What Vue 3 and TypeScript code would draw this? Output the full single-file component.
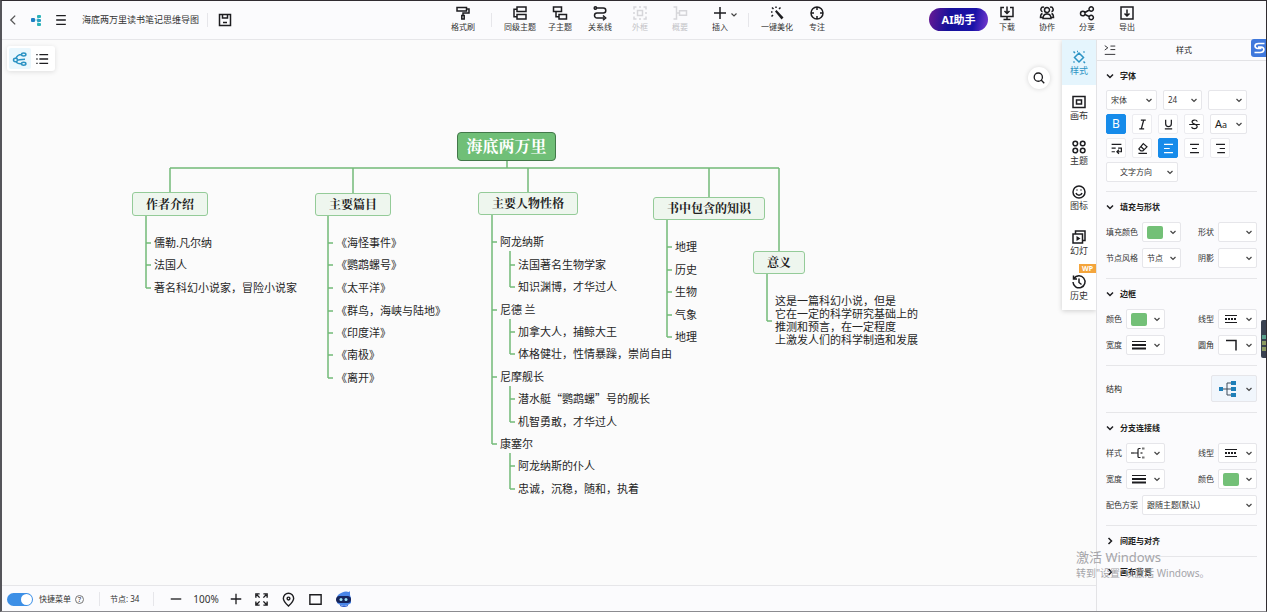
<script setup lang="ts">
import { ref } from 'vue'

interface Icon { s?: string; f?: string }
interface Tool { name: string; icon: string; off?: boolean; menu?: boolean }
interface Leaf { text: string; y: number; kids?: Leaf[] }
interface Branch { text: string; x: number; y: number; w: number; h: number; leafX: number; leaves: Leaf[] }
interface Field { label: string; kind: 'select' | 'swatch' | 'icon'; value?: string; icon?: string; wide?: boolean }
interface Section { title: string; rows: Field[][] }

const icons: Record<string, Icon> = {
  back: { s: 'M10.5 3 5.5 8l5 5' },
  menu: { s: 'M2.500 3h11M2.500 8h11M2.500 13h11' },
  save: { s: 'M2.500 2.500h11v11h-11zM5.500 2.500v3.500h5V2.500M6 10.500h4' },
  brush: { s: 'M2 2.500h9.500v3.500H2zM11.500 4H14v4H8v2.500M6.800 10.500h2.400V14H6.800z' },
  peer: { s: 'M5 2h9v4.500H5zM5 9.500h9V14H5zM5 4.200H2v7.600h3' },
  child: { s: 'M1.500 2h8v4.500h-8zM7 9.500h7.500V14H7zM4 6.500v5.300h3' },
  relation: { s: 'M4.500 3h6.800a2.500 2.500 0 0 1 0 5H5a2.500 2.500 0 0 0 0 5h7M2.200 3a1.200 1.200 0 1 0 2.400 0a1.200 1.200 0 1 0-2.400 0M11 10.500l2.700 2.500L11 15.300' },
  frame: { s: 'M5.500 5.500h5v5h-5zM2 4.500V2h2.500M7 2h2M11.500 2H14v2.500M14 7v2M14 11.500V14h-2.500M9 14H7M4.500 14H2v-2.500M2 9V7' },
  summary: { s: 'M1.500 2h3v12h-3M4.500 8h3M7.500 5.800h7v4.400h-7z' },
  plus: { s: 'M8 2v12M2 8h12' },
  minus: { s: 'M2 8h12' },
  wand: { s: 'M3 2.500l1.500 1.500M7 1.500v1.500M11.500 2.500 10 4M2 7h1.500M2.500 11.500 4 10', f: 'M6 6.500 7.500 5 14.500 12.500 12.500 14.500z' },
  focus: { s: 'M2 8a6 6 0 1 0 12 0a6 6 0 1 0-12 0M8 2v3M8 11v3M2 8h3M11 8h3' },
  download: { s: 'M5 2.500H2v9h12v-9h-3M8 1.500V8M5.500 6 8 8.500 10.500 6M8 11.500v3M4.500 14.500h7' },
  team: { s: 'M5.500 5a2.500 2.500 0 1 0 5 0a2.500 2.500 0 1 0-5 0M4 13.500c0-6 8-6 8 0zM5 2.200A2.300 2.300 0 0 0 3.500 6.700M11 2.200a2.300 2.300 0 0 1 1.500 4.500M3.500 8.500C2 9 1.500 10.500 1.500 12.500H4M12.500 8.500c1.500.5 2 2 2 4H12' },
  share: { s: 'M1.500 8.500a2.300 2.300 0 1 0 4.600 0a2.300 2.300 0 1 0-4.600 0M10 4a2.200 2.200 0 1 0 4.400 0a2.200 2.200 0 1 0-4.400 0M10 12.500a2.200 2.200 0 1 0 4.400 0a2.200 2.200 0 1 0-4.400 0M6 7.500 10.200 5M6 9.500l4.200 2' },
  export: { s: 'M2 2h12v12H2zM8 4.500v6M5.500 8.500 8 11l2.500-2.500' },
  mind: { s: 'M1.500 9a2 1.700 0 1 0 4 0a2 1.700 0 1 0-4 0M9.500 3.500a2.200 1.500 0 1 0 4.400 0a2.200 1.500 0 1 0-4.400 0M9.500 12.700a2.200 1.500 0 1 0 4.400 0a2.200 1.500 0 1 0-4.400 0M4 7.500c1-3 3-4 5.500-4M5.500 9c2 0 3-.8 7.500-.8M4 10.500c1 2 3 2.500 5.500 2.300' },
  list: { s: 'M5 3h10M5 8h10M5 13h10M1.500 3H3M1.500 8H3M1.500 13H3' },
  search: { s: 'M2.500 7a4.700 4.700 0 1 0 9.400 0a4.700 4.700 0 1 0-9.400 0M10.700 10.500 14 14' },
  style: { s: 'M8 4 12.500 8.500 8 13 3.500 8.500zM2.500 2.500l1.500 1.500M12.500 3.500l1-1M12.500 12.500l1.500 1.500M3.500 12.500l-1 1M6 2.500h1' },
  canvas: { s: 'M2 2.500h12v11H2zM5.500 6h5v4h-5z' },
  theme: { s: 'M2 4.500a2.300 2.300 0 1 0 4.600 0a2.300 2.300 0 1 0-4.600 0M9.400 4.500a2.300 2.300 0 1 0 4.600 0a2.300 2.300 0 1 0-4.600 0M2 11.500a2.300 2.300 0 1 0 4.600 0a2.300 2.300 0 1 0-4.600 0M9.400 11.500a2.300 2.300 0 1 0 4.600 0a2.300 2.300 0 1 0-4.600 0' },
  smile: { s: 'M2 8a6 6 0 1 0 12 0a6 6 0 1 0-12 0M5 9c1 3 5 3 6 0M6 5.500v1M10 5.500v1' },
  slides: { s: 'M2 5h9.500v9H2zM4.500 5V2H14v9.500h-2.500', f: 'M5.500 7l4 2.500-4 2.500z' },
  history: { s: 'M3 4.500A6 6 0 1 1 2 8M2.500 1.500v3.500H6M8 4.500V8.500l2.500 2' },
  collapse: { s: 'M2 3l3.500 2.500L2 8M8.500 3.500H14M8.500 7.500H14M2 13h12' },
  italic: { s: 'M6 2.500h6M4 13.500h6M9.500 2.500l-3 11' },
  underline: { s: 'M4.500 2v5a3.500 3.500 0 0 0 7 0V2M3.500 13.500h9' },
  strike: { s: 'M11.500 4.500C10.500 1.500 4.800 2 5 5c.2 3 6.500 2 6.300 5.500C11 14 5 14 4.500 11M1.500 8h13' },
  wrap: { s: 'M2 3h12M2 7.500h5M2 12h4M10 7.500h4V12H8.500M11 9.500 8.500 12l2.500 2.500' },
  eraser: { s: 'M9 2l4.500 4L8.500 11H6L3.500 8.500zM6 5.500l4 4M3 14h10.500' },
  left: { s: 'M2.500 3h11M2.500 8h7M2.500 13h11' },
  center: { s: 'M2.500 3h11M5 8h6M2.500 13h11' },
  right: { s: 'M2.500 3h11M7 8h6.500M4 13h9.500' },
  full: { s: 'M2 6V2h4M10 2h4v4M14 10v4h-4M6 14H2v-4M3 3l3 3M13 13l-3-3M13 3l-3 3M3 13l3-3' },
  pin: { s: 'M8 15C4 11 2.500 9 2.500 6.800a5.500 5.500 0 0 1 11 0C13.500 9 12 11 8 15zM6.500 7a1.500 1.500 0 1 0 3 0a1.500 1.500 0 1 0-3 0' },
  screen: { s: 'M2 3h12v10H2z' },
}

const editTools: Tool[][] = [
  [{ name: '格式刷', icon: 'brush' }],
  [
    { name: '同级主题', icon: 'peer' },
    { name: '子主题', icon: 'child' },
    { name: '关系线', icon: 'relation' },
    { name: '外框', icon: 'frame', off: true },
    { name: '概要', icon: 'summary', off: true },
    { name: '插入', icon: 'plus', menu: true },
  ],
  [{ name: '一键美化', icon: 'wand' }, { name: '专注', icon: 'focus' }],
]
const fileTools: Tool[] = [
  { name: '下载', icon: 'download' },
  { name: '协作', icon: 'team' },
  { name: '分享', icon: 'share' },
  { name: '导出', icon: 'export' },
]
const rail: Tool[] = [
  { name: '样式', icon: 'style' },
  { name: '画布', icon: 'canvas' },
  { name: '主题', icon: 'theme' },
  { name: '图标', icon: 'smile' },
  { name: '幻灯', icon: 'slides' },
  { name: '历史', icon: 'history' },
]
const formatButtons = [
  [['加粗', 'bold'], ['斜体', 'italic'], ['下划线', 'underline'], ['删除线', 'strike']],
  [['自动换行', 'wrap'], ['清除格式', 'eraser'], ['左对齐', 'left'], ['居中', 'center'], ['右对齐', 'right']],
]

const shapeSections: Section[] = [
  {
    title: '填充与形状',
    rows: [
      [{ label: '填充颜色', kind: 'swatch' }, { label: '形状', kind: 'select' }],
      [{ label: '节点风格', kind: 'select', value: '节点' }, { label: '阴影', kind: 'select' }],
    ],
  },
  {
    title: '边框',
    rows: [
      [{ label: '颜色', kind: 'swatch' }, { label: '线型', kind: 'icon', icon: 'dash' }],
      [{ label: '宽度', kind: 'icon', icon: 'width' }, { label: '圆角', kind: 'icon', icon: 'corner' }],
    ],
  },
]
const lineSections: Section[] = [
  {
    title: '分支连接线',
    rows: [
      [{ label: '样式', kind: 'icon', icon: 'fork' }, { label: '线型', kind: 'icon', icon: 'dash' }],
      [{ label: '宽度', kind: 'icon', icon: 'width' }, { label: '颜色', kind: 'swatch' }],
      [{ label: '配色方案', kind: 'select', value: '跟随主题(默认)', wide: true }],
    ],
  },
]
const groups = [shapeSections, lineSections]

const root = { text: '海底两万里', x: 457, y: 92, w: 99, h: 29 }
const trunkY = 128
const branches: Branch[] = [
  {
    text: '作者介绍', x: 132, y: 152, w: 76, h: 24, leafX: 154,
    leaves: [{ text: '儒勒.凡尔纳', y: 203 }, { text: '法国人', y: 225 }, { text: '著名科幻小说家，冒险小说家', y: 248 }],
  },
  {
    text: '主要篇目', x: 315, y: 153, w: 76, h: 23, leafX: 336,
    leaves: [
      { text: '《海怪事件》', y: 203 }, { text: '《鹦鹉螺号》', y: 225 }, { text: '《太平洋》', y: 248 },
      { text: '《群鸟，海峡与陆地》', y: 271 }, { text: '《印度洋》', y: 293 }, { text: '《南极》', y: 315 }, { text: '《离开》', y: 338 },
    ],
  },
  {
    text: '主要人物性格', x: 478, y: 152, w: 100, h: 23, leafX: 500,
    leaves: [
      { text: '阿龙纳斯', y: 202, kids: [{ text: '法国著名生物学家', y: 225 }, { text: '知识渊博，才华过人', y: 247 }] },
      { text: '尼德 兰', y: 270, kids: [{ text: '加拿大人，捕鲸大王', y: 292 }, { text: '体格健壮，性情暴躁，崇尚自由', y: 314 }] },
      { text: '尼摩舰长', y: 337, kids: [{ text: '潜水艇“鹦鹉螺”号的舰长', y: 359 }, { text: '机智勇敢，才华过人', y: 382 }] },
      { text: '康塞尔', y: 404, kids: [{ text: '阿龙纳斯的仆人', y: 426 }, { text: '忠诚，沉稳，随和，执着', y: 449 }] },
    ],
  },
  {
    text: '书中包含的知识', x: 653, y: 157, w: 112, h: 23, leafX: 675,
    leaves: [
      { text: '地理', y: 207 }, { text: '历史', y: 230 }, { text: '生物', y: 252 }, { text: '气象', y: 275 }, { text: '地理', y: 297 },
    ],
  },
  {
    text: '意义', x: 753, y: 211, w: 52, h: 23, leafX: 775,
    leaves: [{ text: '这是一篇科幻小说，但是\n它在一定的科学研究基础上的\n推测和预言，在一定程度\n上激发人们的科学制造和发展', y: 281 }],
  },
]

const stemX = (b: Branch) => b.x + b.w / 2
function comb(x: number, top: number, ys: number[]): string {
  return `M${x} ${top}V${ys[ys.length - 1]}` + ys.map(y => `M${x} ${y}h5`).join('')
}
const links: string[] = [
  `M${stemX(branches[0])} ${trunkY}H${stemX(branches[4])}M507 ${root.y + root.h}V${trunkY}`,
]
const texts: { text: string; x: number; y: number }[] = []
for (const b of branches) {
  links.push(`M${stemX(b)} ${trunkY}V${b.y}`)
  links.push(comb(b.leafX - 8, b.y + b.h, b.leaves.map(l => l.y)))
  for (const l of b.leaves) {
    texts.push({ text: l.text, x: b.leafX, y: l.y })
    if (l.kids) {
      links.push(comb(b.leafX + 10, l.y + 9, l.kids.map(k => k.y)))
      for (const k of l.kids) texts.push({ text: k.text, x: b.leafX + 18, y: k.y })
    }
  }
}
const box = (n: { x: number; y: number; w: number; h: number }) => ({
  left: n.x + 'px', top: n.y + 'px', width: n.w + 'px', height: n.h + 'px',
})

const quickMenu = ref(true)
const activeRail = ref('样式')
const pressed = ref<string[]>(['bold', 'left'])
function toggle(name: string) {
  pressed.value = pressed.value.includes(name) ? pressed.value.filter(n => n !== name) : [...pressed.value, name]
}
</script>

<template>
  <div class="app">
    <header class="top">
      <div class="file">
        <button class="plain" aria-label="返回"><svg class="ico back" viewBox="0 0 16 16"><path :d="icons.back.s" /></svg></button>
        <svg class="logo" viewBox="0 0 14 12">
          <path d="M4 6h4M8 2v8" stroke="#7fd0d6" />
          <rect x="1" y="4" width="4" height="4" rx="1" fill="#1f7fc4" />
          <rect x="7" y="1" width="4" height="3" rx="1" fill="#2bb3b8" />
          <rect x="7" y="5" width="4" height="3" rx="1" fill="#2aa0c4" />
          <rect x="7" y="9" width="4" height="3" rx="1" fill="#2bb3b8" />
        </svg>
        <button class="plain" aria-label="菜单"><svg class="ico" viewBox="0 0 16 16"><path :d="icons.menu.s" /></svg></button>
        <h1>海底两万里读书笔记思维导图</h1>
        <i class="bar"></i>
        <button class="plain" aria-label="保存"><svg class="ico big" viewBox="0 0 16 16"><path :d="icons.save.s" /></svg></button>
      </div>
      <nav class="tools" aria-label="编辑">
        <template v-for="(group, g) in editTools" :key="g">
          <i v-if="g" class="bar"></i>
          <button v-for="t in group" :key="t.name" class="tool" :disabled="t.off">
            <span class="pic">
              <svg class="ico big" viewBox="0 0 16 16"><path :d="icons[t.icon].s" /><path v-if="icons[t.icon].f" class="solid" :d="icons[t.icon].f" /></svg>
              <svg v-if="t.menu" class="chev more" viewBox="0 0 8 8"><path d="M1.500 2.500 4 5l2.500-2.500" /></svg>
            </span>
            <span>{{ t.name }}</span>
          </button>
        </template>
      </nav>
      <nav class="tools share" aria-label="文件">
        <button class="ai">AI助手</button>
        <button v-for="t in fileTools" :key="t.name" class="tool">
          <span class="pic"><svg class="ico big" viewBox="0 0 16 16"><path :d="icons[t.icon].s" /></svg></span>
          <span>{{ t.name }}</span>
        </button>
      </nav>
    </header>

    <div class="body">
      <div class="work">
        <main class="board">
          <svg class="links"><path v-for="(d, i) in links" :key="i" :d="d" /></svg>
          <div class="node root" :style="box(root)">{{ root.text }}</div>
          <div v-for="b in branches" :key="b.text" class="node" :style="box(b)">{{ b.text }}</div>
          <div v-for="(t, i) in texts" :key="i" class="leaf" :style="{ left: t.x + 'px', top: t.y + 'px' }">{{ t.text }}</div>

          <div class="views">
            <button class="on" aria-label="导图"><svg class="ico big" viewBox="0 0 16 16"><path :d="icons.mind.s" /></svg></button>
            <button aria-label="大纲"><svg class="ico" viewBox="0 0 16 16"><path :d="icons.list.s" /></svg></button>
          </div>
          <button class="find" aria-label="搜索"><svg class="ico" viewBox="0 0 16 16"><path :d="icons.search.s" /></svg></button>
          <nav class="rail" aria-label="面板">
            <button v-for="r in rail" :key="r.name" :class="{ on: activeRail === r.name }" @click="activeRail = r.name">
              <svg class="ico big" viewBox="0 0 16 16"><path :d="icons[r.icon].s" /><path v-if="icons[r.icon].f" class="solid" :d="icons[r.icon].f" /></svg>
              <span>{{ r.name }}</span>
              <b v-if="r.icon === 'history'" class="badge">WP</b>
            </button>
          </nav>
        </main>
        <footer class="status">
          <input id="quick" v-model="quickMenu" type="checkbox" class="switch">
          <label for="quick">快捷菜单</label>
          <button class="help" aria-label="帮助">?</button>
          <i class="bar"></i>
          <span class="count">节点: 34</span>
          <i class="bar"></i>
          <div class="zoom">
            <button class="plain" aria-label="缩小"><svg class="ico" viewBox="0 0 16 16"><path :d="icons.minus.s" /></svg></button>
            <span>100%</span>
            <button class="plain" aria-label="放大"><svg class="ico" viewBox="0 0 16 16"><path :d="icons.plus.s" /></svg></button>
          </div>
          <div class="modes">
            <button class="plain" aria-label="全屏"><svg class="ico" viewBox="0 0 16 16"><path :d="icons.full.s" /></svg></button>
            <button class="plain" aria-label="定位"><svg class="ico" viewBox="0 0 16 16"><path :d="icons.pin.s" /></svg></button>
            <button class="plain" aria-label="视图"><svg class="ico" viewBox="0 0 16 16"><path :d="icons.screen.s" /></svg></button>
            <button class="plain" aria-label="助手">
              <svg class="bot" viewBox="0 0 18 18">
                <path d="M3 5Q9 0 14 2l1-1v4l1 3v5q-7 6-14 0V7z" fill="#4a86e8" />
                <rect x="1" y="6" width="15" height="7" rx="3.500" fill="#15245c" />
                <circle cx="6" cy="9.500" r="1.500" fill="#9fe3f5" /><circle cx="11" cy="9.500" r="1.500" fill="#9fe3f5" />
                <path d="M5 15q4 2 8 0v1q-4 2-8 0z" fill="#2c57c9" />
              </svg>
            </button>
          </div>
        </footer>
      </div>

      <aside class="panel">
        <div class="head">
          <button class="plain" aria-label="收起"><svg class="ico" viewBox="0 0 16 16"><path :d="icons.collapse.s" /></svg></button>
          <h2>样式</h2>
        </div>
        <section class="font">
          <h3><svg class="chev" viewBox="0 0 8 8"><path d="M1 2.500 4 5.500l3-3" /></svg>字体</h3>
          <div class="row">
            <span class="pick family"><select aria-label="字体"><option>宋体</option></select><svg class="chev" viewBox="0 0 8 8"><path d="M1.500 3 4 5.500 6.500 3" /></svg></span>
            <span class="pick"><select aria-label="字号"><option>24</option></select><svg class="chev" viewBox="0 0 8 8"><path d="M1.500 3 4 5.500 6.500 3" /></svg></span>
            <span class="pick"><select aria-label="文字颜色"><option></option></select><svg class="chev" viewBox="0 0 8 8"><path d="M1.500 3 4 5.500 6.500 3" /></svg></span>
          </div>
          <div v-for="(line, i) in formatButtons" :key="i" class="row">
            <button v-for="f in line" :key="f[1]" class="fmt" :class="{ on: pressed.includes(f[1]) }" :aria-label="f[0]" @click="toggle(f[1])">
              <template v-if="f[1] === 'bold'">B</template>
              <svg v-else class="ico" viewBox="0 0 16 16"><path :d="icons[f[1]].s" /></svg>
            </button>
            <button v-if="i === 0" class="pick case" aria-label="大小写"><span>A<small>a</small></span><svg class="chev" viewBox="0 0 8 8"><path d="M1.500 3 4 5.500 6.500 3" /></svg></button>
          </div>
          <div class="row">
            <span class="pick direction"><select aria-label="文字方向"><option>文字方向</option></select><svg class="chev" viewBox="0 0 8 8"><path d="M1.500 3 4 5.500 6.500 3" /></svg></span>
          </div>
        </section>

        <template v-for="(sections, g) in groups" :key="g">
          <section v-if="g === 1" class="structure">
            <span>结构</span>
            <button class="pick" aria-label="结构">
              <svg class="tree" viewBox="0 0 20 18">
                <path d="M4 9h13M9 9V3h4M9 9v6h4" fill="none" stroke="#3a4a5a" />
                <rect x="1" y="7" width="4" height="4" /><rect x="13" y="1" width="5" height="4" /><rect x="13" y="7" width="5" height="4" /><rect x="13" y="13" width="5" height="4" />
              </svg>
              <svg class="chev" viewBox="0 0 8 8"><path d="M1.500 3 4 5.500 6.500 3" /></svg>
            </button>
          </section>
          <section v-for="s in sections" :key="s.title">
            <h3><svg class="chev" viewBox="0 0 8 8"><path d="M1 2.500 4 5.500l3-3" /></svg>{{ s.title }}</h3>
            <div v-for="(row, r) in s.rows" :key="r" class="row fields">
              <div v-for="f in row" :key="f.label" class="field" :class="{ wide: f.wide }">
                <label :for="s.title + f.label">{{ f.label }}</label>
                <span v-if="f.kind === 'select'" class="pick">
                  <select :id="s.title + f.label"><option>{{ f.value }}</option></select>
                  <svg class="chev" viewBox="0 0 8 8"><path d="M1.500 3 4 5.500 6.500 3" /></svg>
                </span>
                <button v-else :id="s.title + f.label" class="pick">
                  <span v-if="f.kind === 'swatch'" class="swatch"></span>
                  <svg v-else class="mark" viewBox="0 0 16 14">
                    <template v-if="f.icon === 'dash'"><path d="M2 3.500h12M2 10.500h12" /><path d="M2 7h12" stroke-dasharray="2 1" stroke-width="2" /></template>
                    <template v-if="f.icon === 'width'"><path d="M1 3.500h14" /><path d="M1 7h14" stroke-width="2" /><path d="M1 10.500h14" stroke-width="2" /></template>
                    <path v-if="f.icon === 'corner'" d="M3 2.500h10v10" stroke-width="1.500" />
                    <template v-if="f.icon === 'fork'"><path d="M3 7h4M9.500 2.500H8q-1 0-1 1v7q0 1 1 1h1.500" stroke-width="1.200" /><path d="M0 7h3M11 2.500h2.500M11 11.500h2.500M9.500 7h2" stroke="#777" stroke-width="2" /></template>
                  </svg>
                  <svg class="chev" viewBox="0 0 8 8"><path d="M1.500 3 4 5.500 6.500 3" /></svg>
                </button>
              </div>
            </div>
          </section>
        </template>
        <section class="closed"><h3><svg class="chev" viewBox="0 0 8 8"><path d="M2.500 1l3 3-3 3" /></svg>间距与对齐</h3></section>
        <section class="closed last"><h3><svg class="chev" viewBox="0 0 8 8"><path d="M2.500 1l3 3-3 3" /></svg>画布背景</h3></section>
      </aside>
    </div>

    <div class="notice"><p>激活 Windows</p><p>转到"设置"以激活 Windows。</p></div>
    <svg class="ime" viewBox="0 0 16 18">
      <path d="M3 0h13v18H3q-3 0-3-3V3q0-3 3-3z" fill="#3f78dc" />
      <path d="M13.500 4.500H7.500C3 4.500 3 9.500 7 9.500h3.500M3.500 13.500h5.500c5 0 5-5.500 1-5.500H7" fill="none" stroke="#fff" stroke-width="1.700" />
    </svg>
    <div class="gadget"><i></i><i></i><i></i></div>
  </div>
</template>

<style>
html, body { margin: 0; background: #fbfbfb; }
</style>

<style scoped>
.app {
  position: relative; display: flex; flex-direction: column; min-height: 100vh; box-sizing: border-box;
  background: #fbfbfb; color: #333; overflow: hidden;
  font: 8px/12px "Noto Sans", "Noto Sans CJK SC", sans-serif;
}
.app::after { content: ""; position: absolute; inset: 0; pointer-events: none; border: 1px solid #302c31; border-left: 2px solid #55555a; border-bottom-color: #8b8b90; }
.app * { box-sizing: border-box; }
button, select, input { font: inherit; color: inherit; margin: 0; padding: 0; border: 0; background: none; }
button { display: flex; align-items: center; justify-content: center; cursor: pointer; }
h1, h2, h3, p { margin: 0; font: inherit; }
svg { display: block; flex: none; }
.ico { width: 14px; height: 14px; fill: none; stroke: #1d1d20; stroke-width: 1.5; }
.big { width: 16px; height: 16px; }
.ico .solid { fill: #1d1d20; stroke: none; }
.chev { width: 8px; height: 8px; fill: none; stroke: #444; stroke-width: 1.2; }
.bar { width: 1px; height: 14px; background: #e6e6ea; }

.top { display: flex; align-items: center; height: 40px; padding-right: 120px; border-bottom: 1px solid #e6e6e9; background: #fbfbfd; }
.file { flex: 1; display: flex; align-items: center; padding-left: 6px; }
.file h1 { font-size: 9px; margin: 0 8px 0 14px; white-space: nowrap; }
.file .bar { margin-right: 9px; }
.file .back { stroke: #555; }
.logo { width: 14px; height: 12px; margin: 0 10px; fill: none; }
.tools { display: flex; align-items: center; }
.tools .bar { margin: 0 8px; }
.share { margin-left: 92px; }
.tool { width: 40px; flex-direction: column; padding-bottom: 1px; white-space: nowrap; }
.tool:disabled { color: #c2c2c6; cursor: default; }
.tool:disabled .ico { stroke: #d6d6da; }
.pic { position: relative; }
.more { position: absolute; left: 18px; top: 6px; }
.ai { width: 59px; height: 23px; margin-right: -1px; border-radius: 12px; color: #fff; font-size: 11px; font-weight: 700; background: linear-gradient(100deg, #6a1a94, #16109a 35%, #1a12a8 75%, #7a3bd0); }

.body { flex: 1; display: flex; }
.work { flex: 1; min-width: 0; display: flex; flex-direction: column; }
.board { position: relative; flex: 1; min-height: 460px; overflow: hidden; }
.links { position: absolute; inset: 0; width: 100%; height: 100%; fill: none; stroke: #73ba78; stroke-width: 1.5; }
.node {
  position: absolute; display: flex; align-items: center; justify-content: center; padding-bottom: 1px; white-space: nowrap;
  border: 1px solid #94cb98; border-radius: 3px; background: #eef6ee; color: #222;
  font: 700 12px/16px "Noto Serif CJK SC", "Noto Sans CJK SC", serif;
}
.root { border-color: #43784a; border-radius: 4px; background: #70bf77; color: #fff; font-size: 16px; line-height: 20px; }
.leaf { position: absolute; transform: translateY(-50%); padding-bottom: 2px; white-space: pre; color: #262626; font: 11px/13px "Noto Sans CJK SC", sans-serif; }
.views { position: absolute; left: 7px; top: 6px; display: flex; height: 25px; padding: 2px; border-radius: 3px; background: #fff; box-shadow: 0 1px 5px #0000001f; }
.views button { width: 22px; border-radius: 2px; }
.views .on { background: #eaf7fd; }
.on > .ico { stroke: #2b93c4; }
.find { position: absolute; right: 46px; top: 27px; width: 22px; height: 22px; border-radius: 50%; background: #fff; box-shadow: 0 0 5px #00000026; }
.rail { position: absolute; right: 0; top: 0; width: 34px; background: #fff; box-shadow: 0 1px 5px #0000002e; }
.rail button { position: relative; width: 34px; height: 45px; flex-direction: column; font-size: 9px; }
.rail .on { background: #e5f5fd; color: #2b93c4; }
.badge { position: absolute; right: 0; top: -1px; padding: 0 3px; background: #f4a53c; color: #fff; font-size: 7px; line-height: 9px; }

.status { display: flex; align-items: center; height: 27px; padding-left: 7px; border-top: 1px solid #e6e6e9; background: #fbfbfd; }
.switch { appearance: none; width: 26px; height: 13px; margin-right: 6px; padding: 1px; border-radius: 7px; background: #b9bcc2; }
.switch::before { content: ""; display: block; width: 11px; height: 11px; border-radius: 50%; background: #fff; }
.switch:checked { background: #3c8fe6; }
.switch:checked::before { margin-left: auto; }
.help { width: 9px; height: 9px; margin: 0 15px 0 4px; border: 1px solid #777; border-radius: 50%; font-size: 7px; line-height: 7px; }
.count { margin: 0 9px 0 10px; min-width: 34px; white-space: nowrap; }
.zoom { display: flex; align-items: center; margin-left: 15px; font-size: 10px; }
.zoom span { width: 46px; text-align: center; }
.modes { display: flex; align-items: center; margin-left: 11px; gap: 12px; }
.modes .ico { width: 15px; height: 15px; }
.bot { width: 18px; height: 18px; }

.panel { width: 171px; flex: none; border-left: 1px solid #e3e3e6; background: #fbfbfd; }
.head { display: flex; align-items: center; height: 21px; padding: 0 16px 0 6px; border-bottom: 1px solid #e3e3e6; }
.head h2 { flex: 1; text-align: center; color: #222; }
.head .ico { stroke-width: 1; }
section { margin: 0 10px 0 9px; padding: 5px 0 10px; border-bottom: 1px solid #e6e6e9; display: flex; flex-direction: column; gap: 6px; }
h3 { display: flex; align-items: center; gap: 6px; height: 20px; margin-bottom: -1px; color: #1d1d20; font-weight: 700; }
h3 .chev { stroke: #1d1d20; stroke-width: 1.5; }
.row { display: flex; gap: 6px; height: 20px; }
.font { gap: 4px; padding-bottom: 9px; }
.font h3 { margin-bottom: 0; }
.pick { position: relative; width: 39px; height: 20px; display: flex; align-items: center; justify-content: space-between; padding: 0 4px; border: 1px solid #e6e6ea; border-radius: 2px; background: #fff; }
.pick > .chev { position: absolute; right: 3px; pointer-events: none; }
.pick select { appearance: none; position: absolute; inset: 0; width: 100%; padding: 0 12px 0 4px; }
.family { width: 51px; }
.fmt { width: 20px; height: 20px; border: 1px solid #ececf0; border-radius: 2px; background: #fff; font-size: 12px; }
.fmt .ico { width: 13px; height: 13px; }
.fmt.on { border-color: #168bea; background: #168bea; color: #fff; }
.fmt.on .ico { stroke: #fff; }
.case { width: 37px; font-size: 11px; color: #1d1d20; }
.case small { font-size: 9px; }
.direction { width: 72px; }
.direction select { padding-left: 13px; }
.fields { justify-content: space-between; }
.field { display: flex; align-items: center; gap: 4px; white-space: nowrap; }
.wide { flex: 1; }
.wide .pick { flex: 1; width: auto; }
.swatch { width: 16px; height: 13px; border-radius: 2px; background: #73c077; }
.mark { width: 16px; height: 14px; fill: none; stroke: #1d1d20; }
.structure { flex-direction: row; align-items: center; justify-content: space-between; padding: 9px 0 10px; color: #1d1d20; }
.structure .pick { width: 46px; height: 27px; padding: 0 6px; background: #f1f6fc; }
.tree { width: 20px; height: 18px; fill: #1f7fb8; }
.closed { padding: 5px 0; }
.closed h3 { margin: 0; }
.last { border-bottom: 0; }

.notice { position: absolute; right: 59px; bottom: 32px; width: 132px; pointer-events: none; color: #a5a5a9; white-space: nowrap; font-size: 10px; line-height: 14px; }
.notice p:first-child { font-size: 13px; line-height: 18px; }
.ime { position: absolute; right: 0; top: 39px; width: 16px; height: 18px; }
.gadget { position: absolute; right: 0; top: 320px; width: 6px; height: 38px; padding: 15px 1px 0; border-radius: 2px 0 0 2px; background: #394150; display: flex; flex-direction: column; gap: 2px; }
.gadget i { height: 4px; background: #8c9a62; }
.gadget i:first-child { background: #5aa08c; }
</style>
